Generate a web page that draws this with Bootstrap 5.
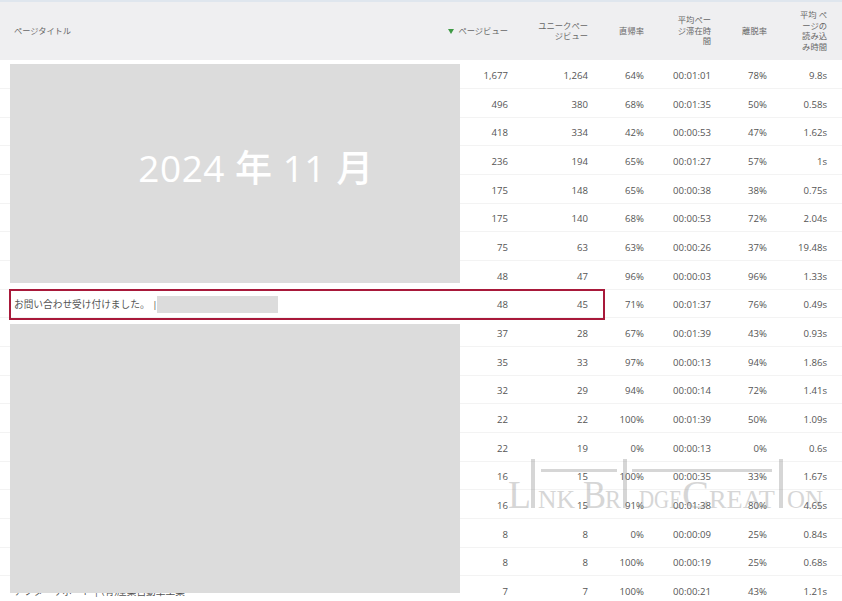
<!DOCTYPE html>
<html lang="ja">
<head>
<meta charset="utf-8">
<title>ページタイトル</title>
<link href="https://cdn.jsdelivr.net/npm/bootstrap@5.3.0/dist/css/bootstrap.min.css" rel="stylesheet">
<style>
html,body{height:601px;overflow:hidden;background:#fff}
body{font-family:"Open Sans","Noto Sans CJK JP",sans-serif;position:relative}
.rep-table{table-layout:fixed;width:842px;margin:0;color:#555;font-size:9.6px;border-top:2px solid #dfe6ee}
.rep-table th,.rep-table td{padding:0;vertical-align:middle;text-align:right;font-weight:400;color:#555}
.rep-table thead th{background:#efeff1;height:59px;font-size:8.3px;line-height:10.5px;color:#666;border:0}
.rep-table tbody td{height:28.67px;padding-top:4px;border-bottom:1px solid #f3f3f3;background:#fff}
.rep-table .t-col{text-align:left;padding-left:14px;width:420px;font-size:9.7px}
.rep-table th.t-col{font-size:8.2px}
.c1{width:88px}.c2{width:80px}.c3{width:56px}.c4{width:67px}.c5{width:56px}.c6{width:60px}.c7{width:15px}
.sort-tri{display:inline-block;width:0;height:0;border-left:3.5px solid transparent;border-right:3.5px solid transparent;border-top:5px solid #3f9a45;margin-right:4px;vertical-align:0}
.hd-wrap{display:block;margin-left:auto}
.w-uniq{width:52px}.w-avg{width:36px}.w-load{width:30px}
.mask{position:absolute;background:#dcdcdc}
.m1{left:10px;top:64px;width:450px;height:219px}
.m2{left:10px;top:324px;width:450px;height:269px}
.m3{left:157px;top:296px;width:121px;height:17px}
.m1-title{display:flex;align-items:center;justify-content:center;color:#fff;font-size:37px;font-weight:500;letter-spacing:.5px;padding-bottom:12px;padding-left:42px}
.hl-box{position:absolute;left:9px;top:289px;width:596px;height:31px;border:2px solid #a8193a}
.wm{position:absolute;left:505px;top:446px;opacity:.34;pointer-events:none}
.wm text{font-family:"Liberation Serif",serif;fill:#8a8a8a}
.wm text.bar{font-family:"Liberation Sans",sans-serif}
.wm rect{fill:#8a8a8a}
</style>
</head>
<body>
<table class="table rep-table">
<thead>
<tr>
<th class="t-col">ページタイトル</th>
<th class="c1"><i class="sort-tri"></i>ページビュー</th>
<th class="c2"><span class="hd-wrap w-uniq">ユニークページビュー</span></th>
<th class="c3">直帰率</th>
<th class="c4"><span class="hd-wrap w-avg">平均ページ滞在時間</span></th>
<th class="c5">離脱率</th>
<th class="c6"><span class="hd-wrap w-load">平均 ページの読み込み時間</span></th>
<th class="c7"></th>
</tr>
</thead>
<tbody>
<tr><td class="t-col"></td><td>1,677</td><td>1,264</td><td>64%</td><td>00:01:01</td><td>78%</td><td>9.8s</td><td></td></tr>
<tr><td class="t-col"></td><td>496</td><td>380</td><td>68%</td><td>00:01:35</td><td>50%</td><td>0.58s</td><td></td></tr>
<tr><td class="t-col"></td><td>418</td><td>334</td><td>42%</td><td>00:00:53</td><td>47%</td><td>1.62s</td><td></td></tr>
<tr><td class="t-col"></td><td>236</td><td>194</td><td>65%</td><td>00:01:27</td><td>57%</td><td>1s</td><td></td></tr>
<tr><td class="t-col"></td><td>175</td><td>148</td><td>65%</td><td>00:00:38</td><td>38%</td><td>0.75s</td><td></td></tr>
<tr><td class="t-col"></td><td>175</td><td>140</td><td>68%</td><td>00:00:53</td><td>72%</td><td>2.04s</td><td></td></tr>
<tr><td class="t-col"></td><td>75</td><td>63</td><td>63%</td><td>00:00:26</td><td>37%</td><td>19.48s</td><td></td></tr>
<tr><td class="t-col"></td><td>48</td><td>47</td><td>96%</td><td>00:00:03</td><td>96%</td><td>1.33s</td><td></td></tr>
<tr><td class="t-col">お問い合わせ受け付けました。 |</td><td>48</td><td>45</td><td>71%</td><td>00:01:37</td><td>76%</td><td>0.49s</td><td></td></tr>
<tr><td class="t-col"></td><td>37</td><td>28</td><td>67%</td><td>00:01:39</td><td>43%</td><td>0.93s</td><td></td></tr>
<tr><td class="t-col"></td><td>35</td><td>33</td><td>97%</td><td>00:00:13</td><td>94%</td><td>1.86s</td><td></td></tr>
<tr><td class="t-col"></td><td>32</td><td>29</td><td>94%</td><td>00:00:14</td><td>72%</td><td>1.41s</td><td></td></tr>
<tr><td class="t-col"></td><td>22</td><td>22</td><td>100%</td><td>00:01:39</td><td>50%</td><td>1.09s</td><td></td></tr>
<tr><td class="t-col"></td><td>22</td><td>19</td><td>0%</td><td>00:00:13</td><td>0%</td><td>0.6s</td><td></td></tr>
<tr><td class="t-col"></td><td>16</td><td>15</td><td>100%</td><td>00:00:35</td><td>33%</td><td>1.67s</td><td></td></tr>
<tr><td class="t-col"></td><td>16</td><td>15</td><td>91%</td><td>00:01:38</td><td>80%</td><td>4.65s</td><td></td></tr>
<tr><td class="t-col"></td><td>8</td><td>8</td><td>0%</td><td>00:00:09</td><td>25%</td><td>0.84s</td><td></td></tr>
<tr><td class="t-col"></td><td>8</td><td>8</td><td>100%</td><td>00:00:19</td><td>25%</td><td>0.68s</td><td></td></tr>
<tr><td class="t-col">アフターサポート | (有)産業自動車工業</td><td>7</td><td>7</td><td>100%</td><td>00:00:21</td><td>43%</td><td>1.21s</td><td></td></tr>
</tbody>
</table>
<div class="mask m1 m1-title">2024 年 11 月</div>
<div class="mask m2"></div>
<div class="mask m3"></div>
<div class="hl-box"></div>
<svg class="wm" width="337" height="75" viewBox="0 0 337 75" role="img" aria-label="Link Bridge Creation">
<rect x="36" y="23" width="76" height="3"/><rect x="127" y="23" width="140" height="3"/>
<text y="62" font-size="40" x="3" textLength="23" lengthAdjust="spacingAndGlyphs">L</text>
<text class="bar" y="62" font-size="71" x="22" textLength="12" lengthAdjust="spacingAndGlyphs">I</text>
<text y="62" font-size="25" x="33" textLength="37" lengthAdjust="spacingAndGlyphs">NK</text>
<text y="62" font-size="40" x="78" textLength="23" lengthAdjust="spacingAndGlyphs">B</text>
<text y="62" font-size="25" x="100" textLength="16" lengthAdjust="spacingAndGlyphs">R</text>
<text class="bar" y="62" font-size="71" x="114" textLength="12" lengthAdjust="spacingAndGlyphs">I</text>
<text y="62" font-size="25" x="134" textLength="43" lengthAdjust="spacingAndGlyphs">DGE</text>
<text y="62" font-size="40" x="177" textLength="27" lengthAdjust="spacingAndGlyphs">C</text>
<text y="62" font-size="25" x="204" textLength="66" lengthAdjust="spacingAndGlyphs">REAT</text>
<text class="bar" y="62" font-size="71" x="270" textLength="12" lengthAdjust="spacingAndGlyphs">I</text>
<text y="62" font-size="25" x="282" textLength="36" lengthAdjust="spacingAndGlyphs">ON</text>
</svg>
<script src="https://cdn.jsdelivr.net/npm/bootstrap@5.3.0/dist/js/bootstrap.bundle.min.js"></script>
</body>
</html>
